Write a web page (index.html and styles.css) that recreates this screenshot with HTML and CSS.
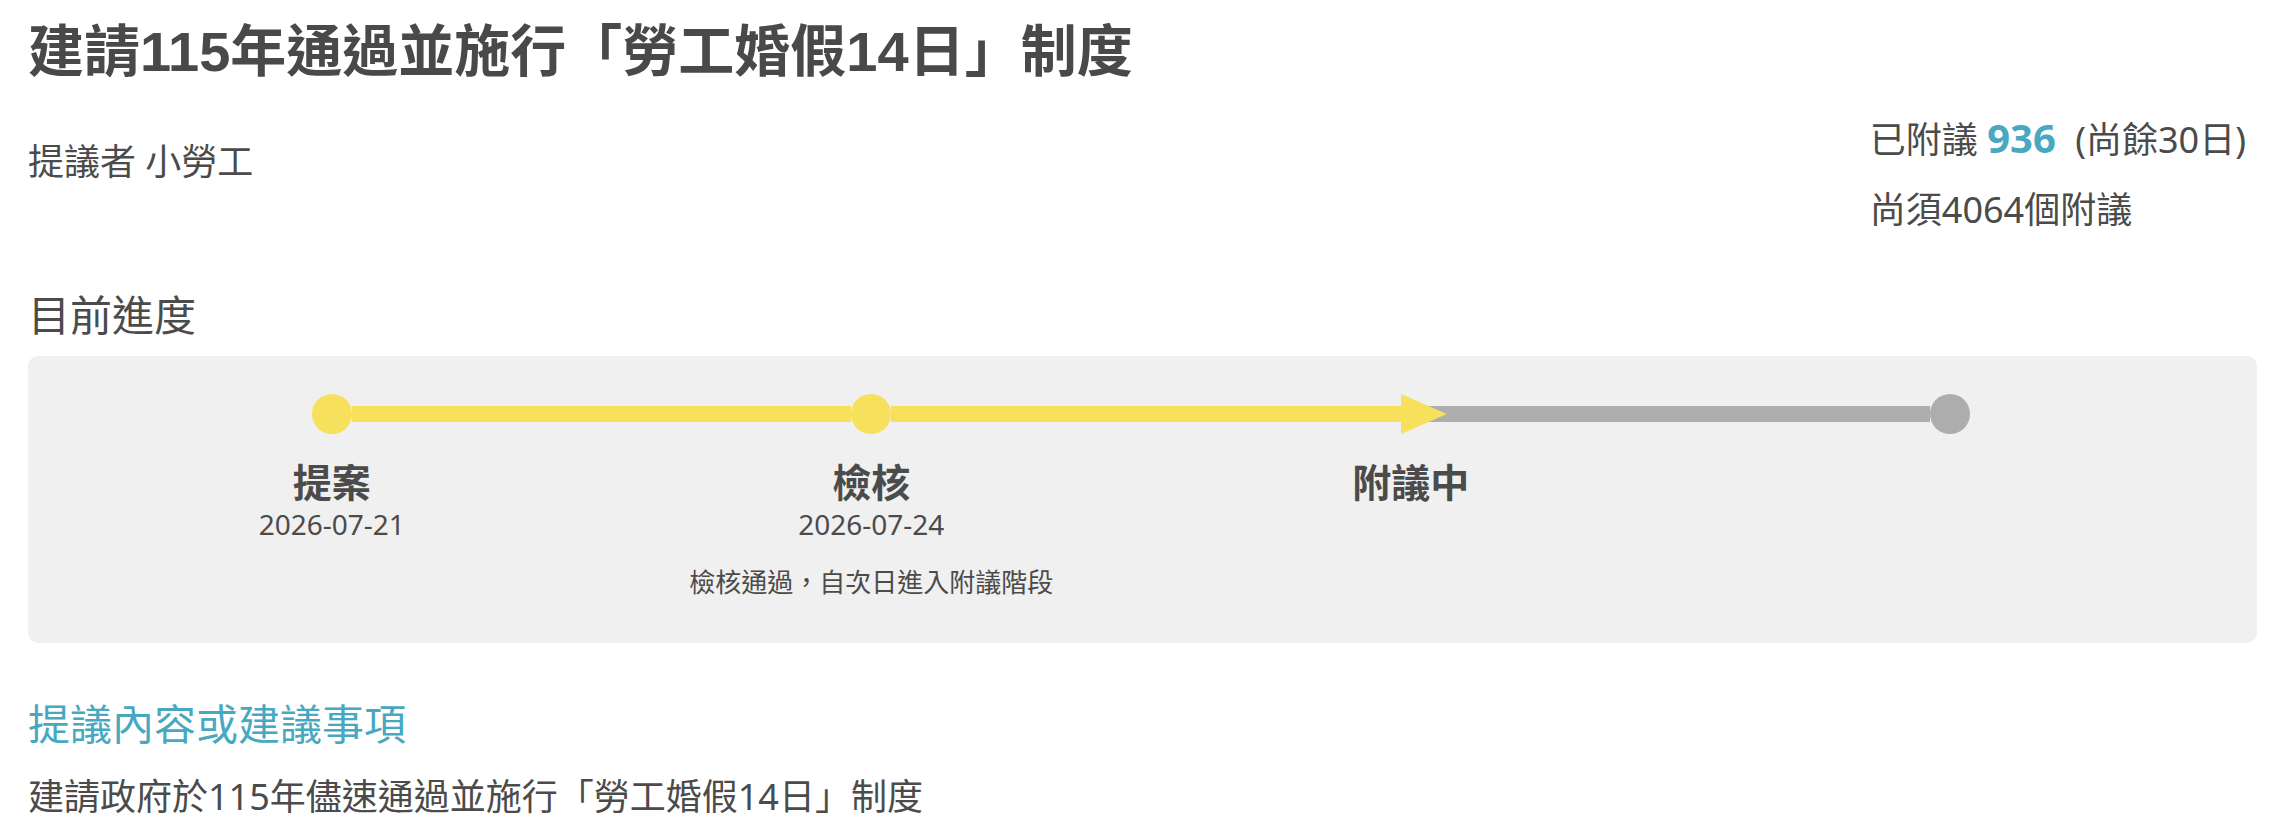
FILE: index.html
```html
<!DOCTYPE html>
<html lang="zh-Hant">
<head>
<meta charset="utf-8">
<title>建請115年通過並施行「勞工婚假14日」制度</title>
<link rel="stylesheet" href="styles.css">
</head>
<body>
<main class="page">
  <h1 class="title">建請115年通過並施行「勞工婚假14日」制度</h1>

  <div class="meta">
    <div class="proposer">提議者 小勞工</div>
    <div class="stats">
      <p class="stat">已附議 <strong class="count">936</strong> <span class="remain">(尚餘30日)</span></p>
      <p class="stat stat-second">尚須4064個附議</p>
    </div>
  </div>

  <h2 class="section-label">目前進度</h2>

  <section class="progress">
    <div class="steps">
      <div class="step">
        <div class="track">
          <span class="seg seg-none"></span>
          <span class="dot dot-done"></span>
          <span class="seg seg-done"></span>
        </div>
        <div class="step-name">提案</div>
        <div class="step-date">2026-07-21</div>
      </div>

      <div class="step">
        <div class="track">
          <span class="seg seg-done"></span>
          <span class="dot dot-done"></span>
          <span class="seg seg-done"></span>
        </div>
        <div class="step-name">檢核</div>
        <div class="step-date">2026-07-24</div>
        <div class="step-note">檢核通過，自次日進入附議階段</div>
      </div>

      <div class="step">
        <div class="track">
          <span class="seg seg-done"></span>
          <svg class="arrow" width="72" height="40" viewBox="0 0 72 40" aria-hidden="true">
            <rect x="36" y="12" width="36" height="16" fill="#adadad"/>
            <rect x="0" y="12" width="27" height="16" fill="#f6e05c"/>
            <polygon points="26,0 72,20 26,40" fill="#f6e05c"/>
          </svg>
          <span class="seg seg-todo"></span>
        </div>
        <div class="step-name">附議中</div>
      </div>

      <div class="step">
        <div class="track">
          <span class="seg seg-todo"></span>
          <span class="dot dot-todo"></span>
          <span class="seg seg-none"></span>
        </div>
      </div>
    </div>
  </section>

  <h2 class="section-heading">提議內容或建議事項</h2>
  <p class="content">建請政府於115年儘速通過並施行「勞工婚假14日」制度</p>
</main>
</body>
</html>
```

FILE: styles.css
```css
html, body {
  margin: 0;
  padding: 0;
  background: #ffffff;
}

.page {
  padding: 0 27px 0 28px;
  font-family: "Noto Sans", "Noto Sans CJK TC", sans-serif;
  color: #4b4b4b;
}

.title {
  margin: 17px 0 0;
  font-family: "Liberation Sans", "Noto Sans CJK TC", sans-serif;
  font-weight: 700;
  font-size: 56px;
  line-height: 70px;
  color: #494949;
}

.meta {
  display: flex;
  justify-content: space-between;
  align-items: flex-start;
  margin-top: 24px;
}

.proposer {
  margin-top: 24px;
  font-size: 36px;
  line-height: 54px;
}

.stats {
  display: flex;
  flex-direction: column;
  margin-right: 11px;
}

.stat {
  margin: 0;
  font-size: 36px;
  line-height: 54px;
  white-space: nowrap;
}

.stat-second {
  margin-top: 16px;
}

.count {
  font-size: 40px;
  font-weight: 700;
  color: #47a8bf;
}

.remain {
  margin-left: 10px;
}

.section-label {
  margin: 50px 0 0;
  font-size: 42px;
  font-weight: 400;
  line-height: 56px;
}

.progress {
  margin-top: 13px;
  padding: 38px 37px 43px 34px;
  background: #f0f0f0;
  border-radius: 10px;
}

.steps {
  display: grid;
  grid-template-columns: repeat(4, 1fr);
}

.step {
  display: flex;
  flex-direction: column;
  align-items: center;
  text-align: center;
}

.track {
  align-self: stretch;
  display: flex;
  align-items: center;
  height: 40px;
}

.seg {
  flex: 1;
  height: 16px;
}

.seg-none { background: transparent; }
.seg-done { background: #f6e05c; }
.seg-todo { background: #adadad; }

.dot {
  flex: none;
  width: 40px;
  height: 40px;
  border-radius: 50%;
}

.dot-done { background: #f6e05c; }
.dot-todo { background: #adadad; }

.arrow {
  flex: none;
  display: block;
}

.step-name {
  margin-top: 25px;
  font-size: 39px;
  font-weight: 700;
  line-height: 46px;
}

.step-date {
  margin-top: 2px;
  font-size: 28px;
  line-height: 34px;
}

.step-note {
  margin-top: 23px;
  font-size: 26px;
  line-height: 36px;
  white-space: nowrap;
}

.section-heading {
  margin: 53px 0 0;
  font-size: 42px;
  font-weight: 400;
  line-height: 56px;
  color: #47a8bf;
}

.content {
  margin: 18px 0 0;
  font-size: 36px;
  line-height: 54px;
}
```
